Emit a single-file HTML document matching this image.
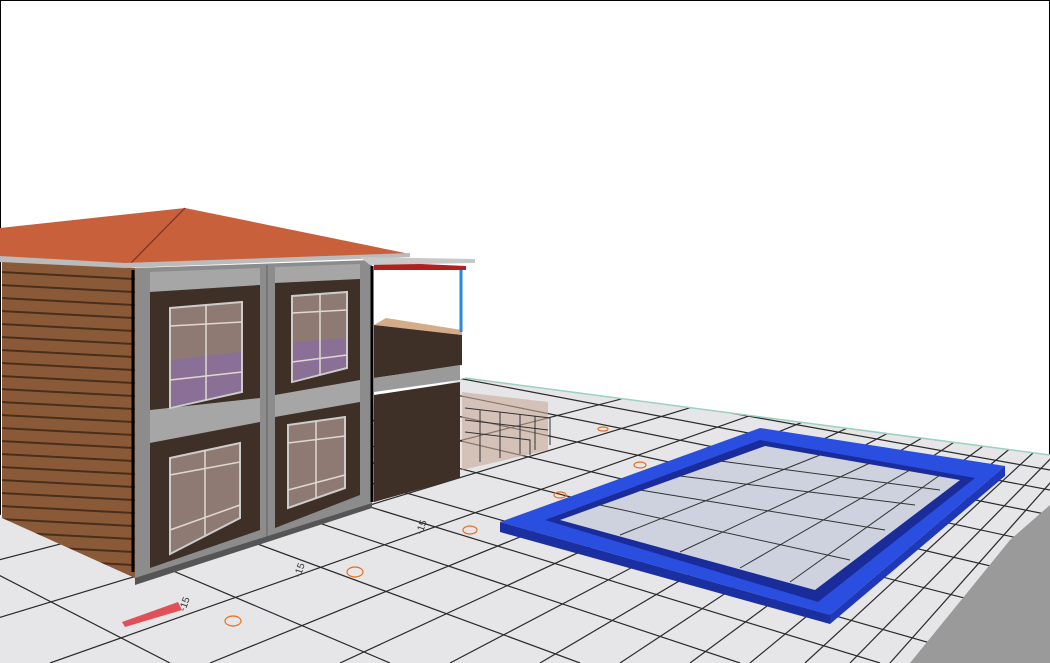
<!DOCTYPE html>
<html><head><meta charset="utf-8"><style>
html,body{margin:0;padding:0;background:#fff}
svg{display:block}
</style></head><body>
<svg width="1050" height="663" viewBox="0 0 1050 663" xmlns="http://www.w3.org/2000/svg">
<defs>
<clipPath id="g"><polygon points="465,378 1050,455 1050,663 0,663 0,515"/></clipPath>
<pattern id="wood" width="20" height="13" patternUnits="userSpaceOnUse" patternTransform="skewY(3)">
<rect width="20" height="13" fill="#8a5a38"/><rect y="11" width="20" height="2" fill="#4a2e1c"/></pattern>
</defs>
<rect x="0.5" y="0.5" width="1049" height="662" fill="#fff" stroke="#000"/>
<polygon points="465,378 1050,455 1050,663 0,663 0,515" fill="#e6e6e8"/>
<g clip-path="url(#g)" stroke="#2a2a2a" stroke-width="1.2">
<line x1="1275" y1="230" x2="-400" y2="663"/><line x1="1275" y1="230" x2="-150" y2="663"/>
<line x1="1275" y1="230" x2="50" y2="663"/><line x1="1275" y1="230" x2="210" y2="663"/>
<line x1="1275" y1="230" x2="340" y2="663"/><line x1="1275" y1="230" x2="450" y2="663"/>
<line x1="1275" y1="230" x2="540" y2="663"/><line x1="1275" y1="230" x2="620" y2="663"/>
<line x1="1275" y1="230" x2="690" y2="663"/><line x1="1275" y1="230" x2="750" y2="663"/>
<line x1="1275" y1="230" x2="805" y2="663"/><line x1="1275" y1="230" x2="850" y2="663"/>
<line x1="1275" y1="230" x2="890" y2="663"/><line x1="1275" y1="230" x2="925" y2="663"/>
<line x1="-875" y1="126" x2="1050" y2="470"/><line x1="-875" y1="126" x2="1050" y2="490"/>
<line x1="-875" y1="126" x2="1050" y2="515"/><line x1="-875" y1="126" x2="1050" y2="545"/>
<line x1="-875" y1="126" x2="1050" y2="580"/><line x1="-875" y1="126" x2="1050" y2="620"/>
<line x1="-875" y1="126" x2="1000" y2="663"/><line x1="-875" y1="126" x2="880" y2="663"/>
<line x1="-875" y1="126" x2="740" y2="663"/><line x1="-875" y1="126" x2="580" y2="663"/>
<line x1="-875" y1="126" x2="390" y2="663"/><line x1="-875" y1="126" x2="170" y2="663"/>
</g>
<line x1="465" y1="378" x2="1050" y2="455" stroke="#9cd0c0" stroke-width="1.5"/>
<polygon points="1010,540 1050,505 1050,663 910,663" fill="#9a9a9a"/>
<polygon points="462,392 548,402 548,450 462,470" fill="#c8a898" opacity="0.6"/>
<g stroke="#333" stroke-width="1" fill="none">
<polyline points="465,408 550,418 550,445"/><polyline points="465,420 548,430"/>
<line x1="480" y1="410" x2="480" y2="462"/><line x1="500" y1="412" x2="500" y2="458"/><line x1="520" y1="414" x2="520" y2="454"/><line x1="535" y1="416" x2="535" y2="450"/>
<polyline points="465,432 530,440 530,455"/>
</g>
<polygon points="2,260 135,268 135,578 2,518" fill="url(#wood)"/>
<polygon points="135,268 372,260 372,505 135,582" fill="#8c8c8c"/>
<polygon points="150,272 260,268 260,285 150,292" fill="#a6a6a6"/>
<polygon points="275,267 360,264 360,279 275,283" fill="#a6a6a6"/>
<polygon points="150,410 260,398 260,422 150,443" fill="#a6a6a6"/>
<polygon points="275,395 360,380 360,402 275,417" fill="#a6a6a6"/>
<line x1="267" y1="265" x2="267" y2="538" stroke="#777" stroke-width="2"/>
<polygon points="135,578 372,503 372,508 135,585" fill="#555"/>
<polygon points="150,292 260,285 260,398 150,410" fill="#3e3026"/>
<polygon points="275,283 360,279 360,380 275,395" fill="#3e3026"/>
<polygon points="150,443 260,422 260,530 150,568" fill="#3e3026"/>
<polygon points="275,417 360,402 360,495 275,528" fill="#3e3026"/>
<g stroke="#ccc" stroke-width="2">
<polygon points="170,308 242,302 242,392 170,408" fill="#8e7a72"/>
<polygon points="292,296 347,292 347,368 292,382" fill="#8e7a72"/>
<polygon points="170,458 240,443 240,518 170,554" fill="#8e7a72"/>
<polygon points="288,425 345,417 345,488 288,508" fill="#8e7a72"/>
</g>
<polygon points="171,360 241,352 241,391 171,407" fill="#8a7096"/>
<polygon points="293,342 346,338 346,367 293,381" fill="#8a7096"/>
<g stroke="#e0d8d0" stroke-width="1.5">
<line x1="206" y1="305" x2="206" y2="400"/><line x1="170" y1="326" x2="242" y2="322"/><line x1="170" y1="380" x2="242" y2="372"/>
<line x1="320" y1="294" x2="320" y2="375"/><line x1="292" y1="313" x2="347" y2="310"/><line x1="292" y1="362" x2="347" y2="355"/>
<line x1="205" y1="450" x2="205" y2="535"/><line x1="170" y1="475" x2="240" y2="462"/><line x1="170" y1="530" x2="240" y2="505"/>
<line x1="316" y1="421" x2="316" y2="498"/><line x1="288" y1="443" x2="345" y2="436"/><line x1="288" y1="490" x2="345" y2="475"/>
</g>
<line x1="133" y1="270" x2="133" y2="572" stroke="#000" stroke-width="3"/>
<line x1="372" y1="266" x2="372" y2="502" stroke="#000" stroke-width="3"/>
<polygon points="374,325 386,318 462,330 462,335" fill="#d4ad88"/>
<polygon points="374,325 462,335 462,365 374,378" fill="#3e3026"/>
<polygon points="374,378 460,365 460,380 374,392" fill="#9a9a9a"/>
<polygon points="374,395 460,382 460,478 374,502" fill="#3e3026"/>
<line x1="461" y1="268" x2="461" y2="332" stroke="#2a8ad8" stroke-width="3"/>
<polygon points="374,262 466,266 466,270 374,270" fill="#b02020"/>
<polygon points="0,228 185,208 410,254 125,265 0,258" fill="#c8603c"/>
<line x1="185" y1="208" x2="130" y2="264" stroke="#7a3020" stroke-width="1.2"/>
<polygon points="0,256 125,263 410,253 410,257 125,268 0,262" fill="#bbb"/>
<polygon points="360,257 475,259 475,263 370,265" fill="#c8c8c8"/>
<polygon points="500,522 760,428 1005,466 830,615" fill="#2a4ee0"/>
<polygon points="500,522 830,615 830,624 500,532" fill="#1a30a0"/>
<polygon points="830,615 1005,466 1005,476 830,624" fill="#1e38b8"/>
<polygon points="545,520 760,440 975,478 818,602" fill="#1a2c9a"/>
<polygon points="560,520 765,446 960,480 815,590" fill="#cdd2de"/>
<g stroke="#333" stroke-width="1" fill="none">
<line x1="600" y1="505" x2="850" y2="560"/><line x1="640" y1="490" x2="885" y2="530"/><line x1="680" y1="476" x2="915" y2="505"/><line x1="720" y1="461" x2="940" y2="490"/>
<line x1="620" y1="535" x2="820" y2="455"/><line x1="680" y1="552" x2="870" y2="463"/><line x1="740" y1="568" x2="910" y2="470"/><line x1="790" y1="582" x2="940" y2="475"/>
</g>
<polygon points="122,622 178,602 182,610 125,627" fill="#e05058"/>
<g fill="none" stroke="#e87020" stroke-width="1.2">
<ellipse cx="233" cy="621" rx="8" ry="5"/><ellipse cx="355" cy="572" rx="8" ry="5"/><ellipse cx="470" cy="530" rx="7" ry="4"/><ellipse cx="560" cy="495" rx="6" ry="3"/><ellipse cx="640" cy="465" rx="6" ry="3"/><ellipse cx="603" cy="429" rx="5" ry="2"/>
</g>
<g font-family="Liberation Sans, sans-serif" font-size="10" fill="#333">
<text x="300" y="578" transform="rotate(-70 300 578)">-15</text>
<text x="422" y="535" transform="rotate(-70 422 535)">-15</text>
<text x="185" y="612" transform="rotate(-70 185 612)">-15</text>
</g>
</svg>
</body></html>
